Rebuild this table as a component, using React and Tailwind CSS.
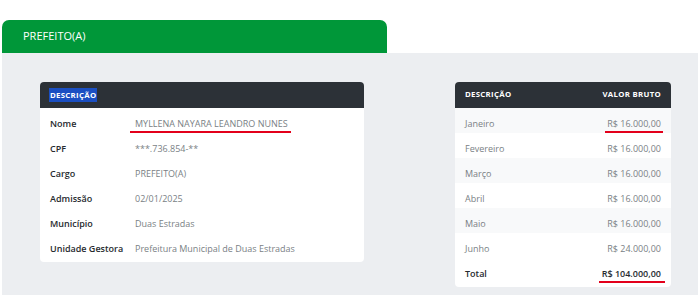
import React from "react";

const servidor = [
  ["Nome", "MYLLENA NAYARA LEANDRO NUNES", true],
  ["CPF", "***.736.854-**"],
  ["Cargo", "PREFEITO(A)"],
  ["Admissão", "02/01/2025"],
  ["Município", "Duas Estradas"],
  ["Unidade Gestora", "Prefeitura Municipal de Duas Estradas"],
];

const meses = [
  ["Janeiro", "R$ 16.000,00", true],
  ["Fevereiro", "R$ 16.000,00"],
  ["Março", "R$ 16.000,00"],
  ["Abril", "R$ 16.000,00"],
  ["Maio", "R$ 16.000,00"],
  ["Junho", "R$ 24.000,00"],
];

// red marker line drawn under a value
function Marked({ children, on, className = "" }) {
  return (
    <span className="relative inline-block">
      {children}
      {on && <span className={"absolute bottom-[-3px] h-[2px] bg-[#e3001b] " + className} />}
    </span>
  );
}

export default function App() {
  return (
    <div className="w-[698px] h-[297px] bg-white pt-[20px] text-[9px]" style={{ fontFamily: '"Open Sans", "Liberation Sans", sans-serif' }}>
      <div className="ml-[2px] w-[385px] h-[33px] bg-[#009739] rounded-t-[7px] flex items-center pl-[21px] text-white text-[11px]">
        PREFEITO(A)
      </div>

      <div className="ml-[2px] h-[242px] bg-[#eceef1] pt-[29px] pl-[38px] pr-[27px] flex justify-between items-start">
        {/* dados do servidor */}
        <div className="w-[324px] bg-white rounded-[4px] pb-[4px]">
          <div className="h-[26px] bg-[#2c3137] rounded-t-[4px] flex items-center pl-[9px]">
            <span className="bg-[#1b4fc2] text-white font-bold text-[7.8px] tracking-[0.3px] leading-[14px] px-px">DESCRIÇÃO</span>
          </div>
          {servidor.map(([label, value, mark]) => (
            <div key={label} className="h-[25px] flex items-center pt-[6px] whitespace-nowrap">
              <div className="w-[95px] pl-[10px] text-[#262a2e] font-semibold">{label}</div>
              <div className="text-[#7a7f85]">
                <Marked on={mark} className="left-[-5px] right-[-3px]">{value}</Marked>
              </div>
            </div>
          ))}
        </div>

        {/* remuneração */}
        <div className="w-[216px] bg-white rounded-[4px] pb-[4px]">
          <div className="h-[26px] bg-[#2c3137] rounded-t-[4px] flex items-center justify-between px-[10px] text-white font-bold text-[7.8px] tracking-[0.3px]">
            <span>DESCRIÇÃO</span>
            <span>VALOR BRUTO</span>
          </div>
          {meses.map(([mes, valor, mark], i) => (
            <div key={mes} className={"h-[25px] flex items-center justify-between px-[10px] pt-[6px] text-[#7a7f85] " + (i % 2 === 0 ? "bg-[#f8f9fa]" : "")}>
              <span>{mes}</span>
              <Marked on={mark} className="left-[-2px] right-[-2px]">{valor}</Marked>
            </div>
          ))}
          <div className="h-[25px] flex items-center justify-between px-[10px] pt-[6px] text-[#262a2e] font-semibold">
            <span>Total</span>
            <Marked on className="left-[-3px] right-[-4px]">R$ 104.000,00</Marked>
          </div>
        </div>
      </div>
    </div>
  );
}
